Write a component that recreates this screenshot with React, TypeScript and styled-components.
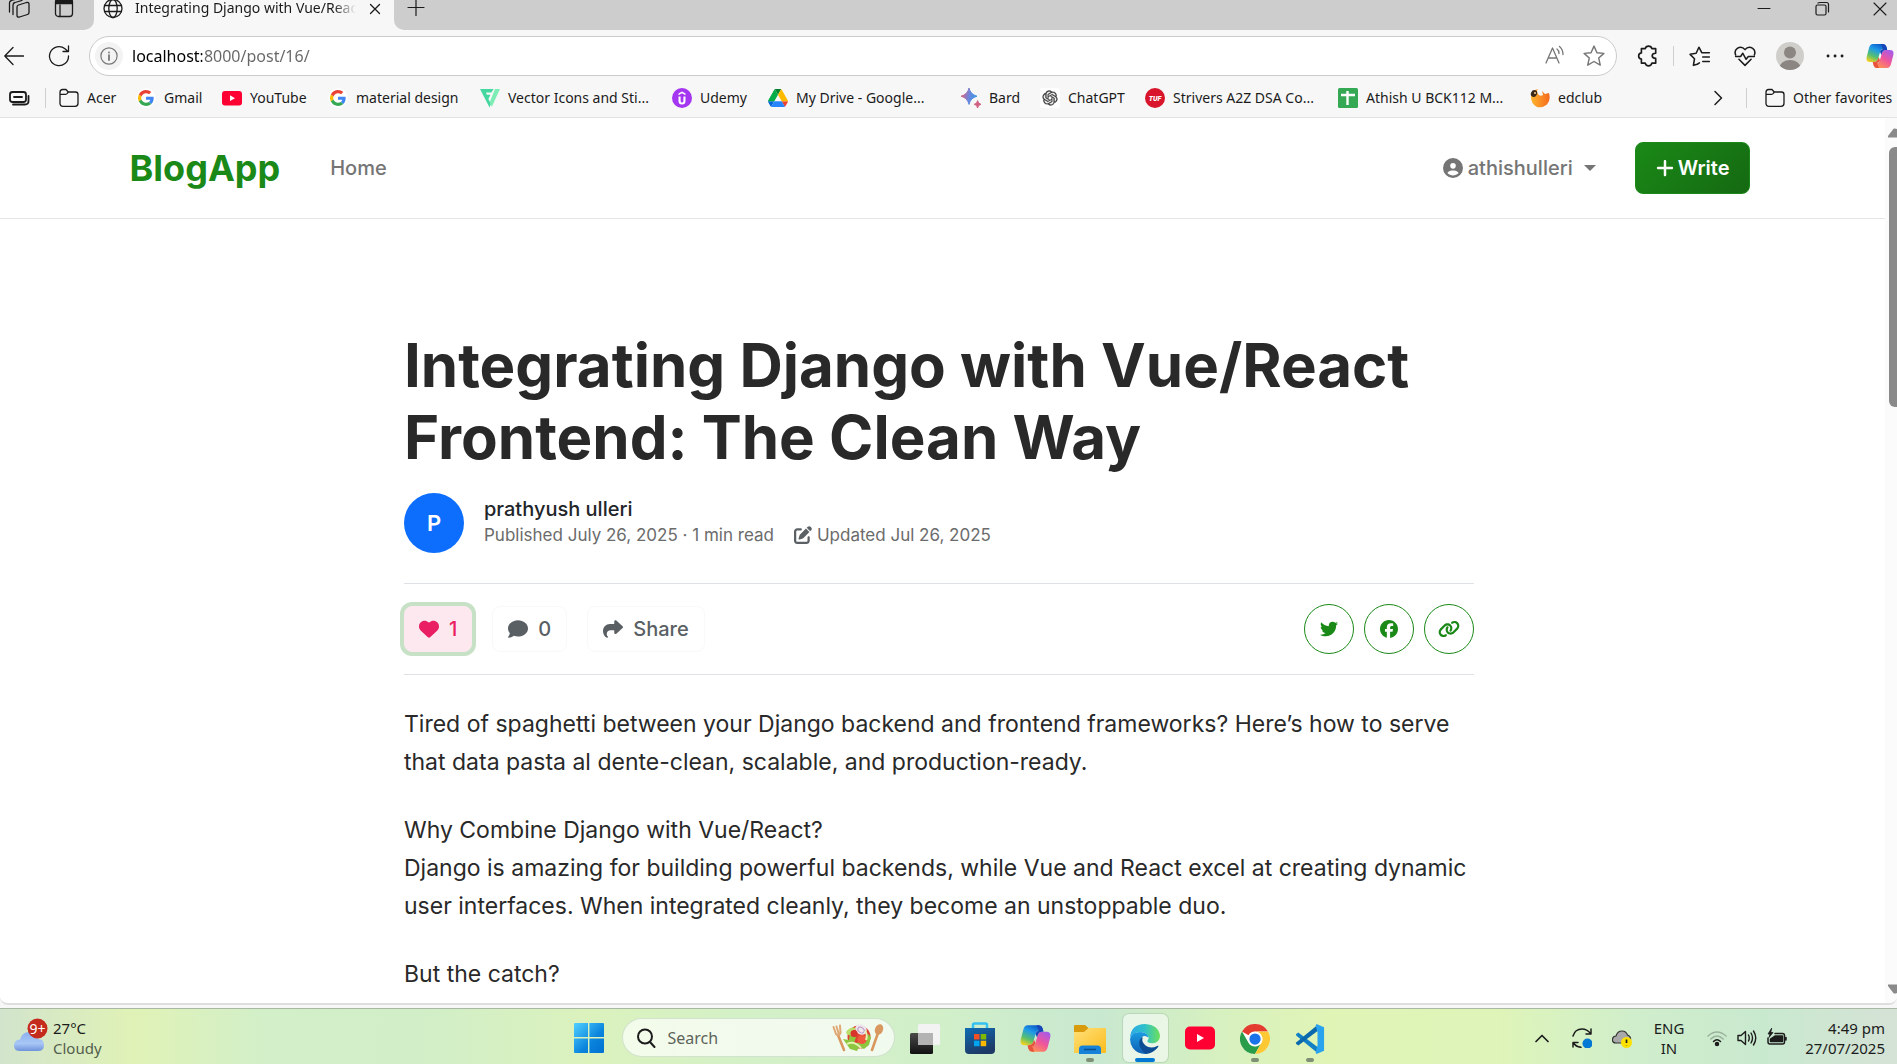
import React from 'react';
import styled, { createGlobalStyle, css } from 'styled-components';
import {
  FaCircleUser, FaPlus, FaHeart, FaComment, FaShare, FaTwitter, FaFacebook, FaLink, FaPenToSquare,
} from 'react-icons/fa6';

const UI = '"Noto Sans", "Open Sans", sans-serif';
const WEB = 'Inter, "Liberation Sans", sans-serif';

const Global = createGlobalStyle`
  * { box-sizing: border-box; }
  html, body { margin: 0; padding: 0; overflow: hidden; }
  body { font-family: ${WEB}; background: #f7f7f7; }
  button { font: inherit; color: inherit; border: 0; background: none; padding: 0; margin: 0; }
  a { color: inherit; text-decoration: none; }
  svg { display: block; flex: none; }
`;

const Screen = styled.div`
  display: flex;
  flex-direction: column;
  height: 100vh;
  background: #f7f7f7;
`;

/* ---------- browser frame ---------- */

const TabStrip = styled.div`
  display: flex;
  height: 30px;
  font: 14px/16px ${UI};
  color: #1b1b1b;
  background: #f7f7f7;
`;
const StripLeft = styled.div`
  display: flex;
  width: 94px;
  padding-left: 8px;
  gap: 24px;
  background: #cdcdcd;
  border-radius: 0 0 10px 0;
`;
const StripRight = styled.div`
  display: flex;
  flex: 1;
  justify-content: space-between;
  padding: 0 7px 0 12px;
  background: #cdcdcd;
  border-radius: 0 0 0 10px;
`;
const Tab = styled.div`
  display: flex;
  width: 300px;
  padding: 0 12px 0 9px;
  gap: 12px;
`;
const TabTitle = styled.span`
  flex: 1;
  overflow: hidden;
  white-space: nowrap;
  mask-image: linear-gradient(90deg, #000 90%, transparent);
`;
const WindowButtons = styled.div`
  display: flex;
  gap: 38px;
`;
const IconButton = styled.button`
  display: flex;
  align-items: center;
  justify-content: center;
  flex: none;
`;
const StripButton = styled(IconButton)`
  height: 18px;
`;

const Toolbar = styled.div`
  display: flex;
  align-items: center;
  height: 52px;
  padding-left: 4px;
  color: #1b1b1b;
`;
const NavButtons = styled.div`
  display: flex;
  gap: 24px;
  padding-right: 19px;
`;
const AddressBar = styled.div`
  display: flex;
  align-items: center;
  flex: 1;
  height: 40px;
  padding: 0 11px 0 5px;
  gap: 17px;
  border: 1px solid #cbcbcb;
  border-radius: 20px;
  background: #fff;
  color: #767676;
`;
const SiteInfo = styled(IconButton)`
  width: 28px;
  height: 28px;
  margin-right: -8px;
  border-radius: 50%;
  background: #f3f3f3;
`;
const Url = styled.input`
  flex: 1;
  min-width: 0;
  height: 30px;
  padding: 0;
  border: 0;
  outline: 0;
  font: 16px/30px ${UI};
  color: transparent;
  background: linear-gradient(90deg, #000 70px, #666 70px);
  background-clip: text;
`;
const ToolbarActions = styled.div`
  display: flex;
  align-items: center;
  width: 280px;
  padding-left: 8px;
`;
const Divider = styled.span`
  flex: none;
  width: 1px;
  height: 20px;
  background: #cfcfcf;
`;
const ToolButton = styled(IconButton)`
  width: 45px;
  height: 36px;
`;
const ToolDivider = styled(Divider)`
  margin: 0 3px;
`;

const Bookmarks = styled.nav`
  display: flex;
  align-items: center;
  height: 36px;
  padding: 0 5px 4px 8px;
  font: 14px/20px ${UI};
  color: #1b1b1b;
  border-bottom: 1px solid #e3e3e3;
`;
const BookmarkList = styled.div`
  display: flex;
  flex: 1;
  gap: 20px;
  padding-left: 13px;
`;
const Bookmark = styled.a<{ $label?: number }>`
  display: flex;
  align-items: center;
  gap: 8px;
  span { width: ${p => (p.$label ? `${p.$label}px` : 'auto')}; white-space: nowrap; }
`;
const BookmarkTail = styled.div`
  display: flex;
  align-items: center;
  gap: 18px;
`;
const EssentialsButton = styled(IconButton)`
  width: 22px;
  margin-right: 15px;
`;

/* ---------- web page ---------- */

const Viewport = styled.div`
  display: flex;
  flex: 1;
  min-height: 0;
  overflow: hidden;
  background: #fff;
  border-bottom: 2px solid #dedede;
  border-radius: 0 0 8px 8px;
`;
const Page = styled.div`
  flex: 1;
  min-width: 0;
  overflow: hidden;
`;
const Scrollbar = styled.div`
  display: flex;
  flex-direction: column;
  justify-content: space-between;
  align-items: flex-end;
  width: 12px;
  padding: 10px 0 9px;
  overflow: hidden;
  background: #fbfbfb;
`;
const Thumb = styled.div`
  width: 8px;
  height: 260px;
  margin: 9px 0 auto;
  border-radius: 6px 0 0 6px;
  background: #8a8a8a;
`;

const SiteHeader = styled.header`
  padding: 0 6px 0 0;
  border-bottom: 1px solid #e6e6e6;
`;
const HeaderInner = styled.div`
  display: flex;
  align-items: center;
  max-width: 1620px;
  height: 100px;
  margin: 0 auto;
  font-size: 20px;
  font-weight: 500;
  color: #757575;
`;
const Brand = styled.a`
  font-size: 36px;
  line-height: 48px;
  font-weight: 700;
  color: #1a8917;
`;
const HomeLink = styled.a`
  margin: 0 auto 0 50px;
`;
const UserMenu = styled.button`
  display: flex;
  align-items: center;
  gap: 5px;
  margin-right: 39px;
`;
const Caret = styled.i`
  margin-left: 6px;
  border: 6px solid transparent;
  border-top-color: currentColor;
  border-bottom: 0;
`;
const WriteButton = styled.button`
  display: flex;
  align-items: center;
  gap: 3px;
  height: 52px;
  padding: 0 19px;
  font-weight: 600;
  color: #fff;
  border: 1px solid #1a8917;
  border-radius: 8px;
  background: linear-gradient(135deg, #1a8917, #156912);
`;

const ArticleWrap = styled.main`
  padding: 110px 7px 0 0;
`;
const Article = styled.article`
  max-width: 1070px;
  margin: 0 auto;
  color: #292929;
`;
const Title = styled.h1`
  margin: 0 0 20px;
  font-size: 60px;
  line-height: 72px;
  font-weight: 700;
`;
const Byline = styled.div`
  display: flex;
  align-items: center;
  gap: 20px;
  margin-bottom: 30px;
`;
const AuthorBadge = styled.div`
  display: grid;
  place-items: center;
  width: 60px;
  height: 60px;
  border-radius: 50%;
  background: #0d6efd;
  color: #fff;
  font-size: 22px;
  font-weight: 600;
`;
const AuthorText = styled.div`
  padding-bottom: 4px;
`;
const AuthorName = styled.div`
  font-size: 20px;
  line-height: 28px;
  font-weight: 500;
  color: #212529;
`;
const Meta = styled.div`
  display: flex;
  align-items: center;
  gap: 5px;
  font-size: 17px;
  line-height: 24px;
  color: #6b6b6b;
  svg { margin-left: 15px; color: #5b6065; }
`;
const ActionBar = styled.div`
  display: flex;
  justify-content: space-between;
  align-items: center;
  padding: 20px 0;
  border: solid #dee2e6;
  border-width: 1px 0;
`;
const Group = styled.div<{ $gap: number }>`
  display: flex;
  align-items: center;
  gap: ${p => p.$gap}px;
`;
const ActionButton = styled.button<{ $active?: boolean }>`
  display: flex;
  align-items: center;
  gap: 10px;
  height: 46px;
  padding: 0 15px;
  font-size: 20px;
  font-weight: 500;
  color: #5a5f64;
  border: 1px solid #f8f9fa;
  border-radius: 8px;
  ${p => p.$active && css`
    padding: 0 14px;
    color: #e91e63;
    background: #fde8ef;
    border-color: #fde8ef;
    box-shadow: 0 0 0 4px #c6e1c5;
  `}
`;
const RoundButton = styled.button`
  display: grid;
  place-items: center;
  width: 50px;
  height: 50px;
  border: 1px solid #1a8917;
  border-radius: 50%;
  color: #1a8917;
`;
const Copy = styled.div`
  padding-top: 30px;
  font-size: 23px;
  line-height: 38px;
  p { margin: 0 0 30px; }
`;

/* ---------- taskbar ---------- */

const FrameEdge = styled.div`
  height: 3px;
`;
const TaskbarRoot = styled.footer`
  display: grid;
  grid-template-columns: 1fr auto 1fr;
  align-items: center;
  height: 56px;
  padding-top: 2px;
  font: 15px/20px ${UI};
  color: #1c1c1c;
  border-top: 1px solid #a8b8a2;
  background: linear-gradient(90deg, #d2e4cc 0%, #e0f2b6 7%, #d2efc9 14%, #d1eec8 22%, #dbf2bd 31%, #d3f0c8 40%, #d1efc9 50%, #c8e8d0 58%, #d6f0c0 64%, #e0f4b6 70%, #def4b8 79%, #d0eecb 86%, #c9e9cf 93%, #d5e2d6 100%);
`;
const Weather = styled.button`
  display: flex;
  align-items: center;
  gap: 5px;
  padding-left: 13px;
  text-align: left;
  small { display: block; font-size: 15px; color: #535f4d; }
`;
const Dock = styled.div`
  display: flex;
  align-items: center;
  padding-left: 14px;
`;
const DockButton = styled.button<{ $active?: boolean; $running?: boolean }>`
  display: flex;
  flex-direction: column;
  align-items: center;
  justify-content: flex-end;
  gap: 4px;
  width: 45px;
  height: 48px;
  margin: 0 5px;
  border-radius: 6px;
  background: ${p => (p.$active ? 'rgba(255,255,255,.55)' : 'none')};
  box-shadow: ${p => (p.$active ? '0 0 0 1px rgba(150,180,150,.35)' : 'none')};
  &::after {
    content: '';
    width: ${p => (p.$active ? 20 : 8)}px;
    height: 4px;
    border-radius: 2px;
    background: ${p => (p.$active ? '#0078d4' : p.$running ? '#7d8f74' : 'transparent')};
  }
`;
const SearchBox = styled.label`
  display: flex;
  align-items: center;
  width: 273px;
  height: 39px;
  margin: 0 3px 0 18px;
  padding: 0 10px 0 13px;
  gap: 12px;
  border-radius: 20px;
  background: rgba(255,255,255,.68);
  border: 1px solid rgba(150,180,150,.35);
  input {
    flex: 1;
    min-width: 0;
    padding: 0;
    border: 0;
    outline: 0;
    background: none;
    font: 16px/24px ${UI};
    &::placeholder { color: #5d645a; opacity: 1; }
  }
`;
const Tray = styled.div`
  display: flex;
  align-items: center;
  justify-content: flex-end;
  padding-right: 12px;
`;
const TrayIcons = styled.div<{ $gap: number }>`
  display: flex;
  align-items: center;
  gap: ${p => p.$gap}px;
`;
const Language = styled.button`
  width: 48px;
  margin: 0 14px 0 13px;
  text-align: center;
`;
const Clock = styled.button`
  width: 94px;
  margin-left: 4px;
  text-align: right;
  white-space: nowrap;
`;

/* ---------- drawings ---------- */

type LineProps = { w?: number; h?: number; box?: string; sw?: number; children: React.ReactNode };
const Line = ({ w = 20, h, box = '0 0 20 20', sw = 1.3, children }: LineProps) => (
  <svg width={w} height={h ?? w} viewBox={box} fill="none" stroke="currentColor" strokeWidth={sw} strokeLinecap="round" strokeLinejoin="round" aria-hidden="true">
    {children}
  </svg>
);

const FolderIcon = () => (
  <Line><path d="M1 4.2Q1 1.5 3.6 1.5H7L9.2 4H16.5Q19 4 19 6.6V15.2Q19 18.3 16 18.3H4Q1 18.3 1 15.2ZM1 6.4H6.2Q7.2 6.4 8 5.6L9.4 4" /></Line>
);
const GoogleIcon = () => (
  <svg width="20" height="20" viewBox="-6 -6 60 60" aria-hidden="true">
    <circle cx="24" cy="24" r="29" fill="#fff" />
    <path fill="#EA4335" d="M24 9.5c3.54 0 6.71 1.22 9.21 3.6l6.85-6.85C35.9 2.38 30.47 0 24 0 14.62 0 6.51 5.38 2.56 13.22l7.98 6.19C12.43 13.72 17.74 9.5 24 9.5z" />
    <path fill="#4285F4" d="M46.98 24.55c0-1.57-.15-3.09-.38-4.55H24v9.02h12.94c-.58 2.96-2.26 5.48-4.78 7.18l7.73 6c4.51-4.18 7.09-10.36 7.09-17.65z" />
    <path fill="#FBBC05" d="M10.53 28.59A14.5 14.5 0 0 1 9.77 24c0-1.6.27-3.14.76-4.59l-7.98-6.19A23.9 23.9 0 0 0 0 24c0 3.88.92 7.54 2.56 10.78z" />
    <path fill="#34A853" d="M24 48c6.48 0 11.93-2.13 15.89-5.81l-7.73-6c-2.15 1.45-4.92 2.3-8.16 2.3-6.26 0-11.57-4.22-13.47-9.91l-7.98 6.19C6.51 42.62 14.62 48 24 48z" />
  </svg>
);
const YouTubeIcon = () => (
  <svg width="20" height="20" viewBox="0 0 20 20" aria-hidden="true">
    <rect y="3" width="20" height="14.4" rx="3" fill="#ff0033" /><path d="M8 7.3 13 10.2 8 13.1Z" fill="#fff" />
  </svg>
);
const VectorIcon = () => (
  <svg width="20" height="20" viewBox="0 0 22 22" aria-hidden="true">
    <path d="M0 1H15L12.5 5H6.5L7.5 7.5H11.500L9.500 11.500H9L12 17.5L10.5 21.500Z" fill="#44d8a0" />
    <path d="M16.500 1H22L13 20.500L10.800 15.5Z" fill="#7cedb4" />
  </svg>
);
const UdemyIcon = () => (
  <svg width="20" height="20" viewBox="0 0 20 20" aria-hidden="true">
    <circle cx="10" cy="10" r="10" fill="#a435f0" />
    <path d="M6.5 5.5 10 3.4 13.5 5.5V7.2L10 5.2 6.5 7.2ZM6.5 8.5H8.6V13Q8.6 14.6 10 14.6T11.4 13V8.5H13.5V13Q13.5 16.5 10 16.5T6.5 13Z" fill="#fff" />
  </svg>
);
const DriveIcon = () => (
  <svg width="20" height="20" viewBox="0 0 87.3 78" aria-hidden="true">
    <path d="m6.6 66.85 3.85 6.65c.8 1.4 1.95 2.5 3.3 3.3l13.75-23.8h-27.5c0 1.55.4 3.1 1.2 4.5z" fill="#0066da" />
    <path d="m43.65 25-13.75-23.8c-1.35.8-2.5 1.9-3.3 3.3l-25.4 44a9.06 9.06 0 0 0-1.2 4.5h27.5z" fill="#00ac47" />
    <path d="m73.55 76.8c1.35-.8 2.5-1.9 3.3-3.3l1.6-2.75 7.65-13.25c.8-1.4 1.2-2.95 1.2-4.5h-27.5l5.85 11.5z" fill="#ea4335" />
    <path d="m43.65 25 13.75-23.8c-1.35-.8-2.9-1.2-4.5-1.2h-18.5c-1.6 0-3.15.45-4.5 1.2z" fill="#00832d" />
    <path d="m59.8 53h-32.3l-13.75 23.8c1.35.8 2.9 1.2 4.5 1.2h50.8c1.6 0 3.15-.45 4.5-1.2z" fill="#2684fc" />
    <path d="m73.4 26.5-12.7-22c-.8-1.4-1.95-2.5-3.3-3.3l-13.75 23.8 16.15 28h27.45c0-1.55-.4-3.1-1.2-4.5z" fill="#ffba00" />
  </svg>
);
const BardIcon = () => (
  <svg width="20" height="20" viewBox="0 0 20 20" aria-hidden="true">
    <defs><linearGradient id="bard" x1="0" x2="1" y1=".4" y2=".6"><stop stopColor="#e0607d" /><stop offset=".5" stopColor="#6a86dd" /><stop offset="1" stopColor="#3a9be8" /></linearGradient></defs>
    <path d="M8 0Q9.500 6.500 16 8.200 9.500 9.900 8 16.400 6.500 9.900 0 8.200 6.500 6.500 8 0Z" fill="url(#bard)" stroke="url(#bard)" strokeWidth="1" />
    <path d="M16.6 12.6Q17 15.8 20 16.3 17 16.8 16.6 20 16.2 16.8 13.2 16.3 16.2 15.8 16.6 12.6Z" fill="#d0607f" stroke="#d0607f" strokeWidth="1" />
  </svg>
);
const GptIcon = () => (
  <svg width="20" height="20" viewBox="-4 -4 32 32" aria-hidden="true">
    <rect x="-4" y="-4" width="32" height="32" rx="4" fill="#fff" />
    <path fill="#3b3b3b" stroke="#3b3b3b" strokeWidth=".5" d="M22.28 9.82a5.98 5.98 0 0 0-.52-4.91 6.05 6.05 0 0 0-6.51-2.9A6.07 6.07 0 0 0 4.98 4.18a5.98 5.98 0 0 0-4 2.9 6.05 6.05 0 0 0 .74 7.1 5.98 5.98 0 0 0 .51 4.91 6.05 6.05 0 0 0 6.52 2.9A5.98 5.98 0 0 0 13.26 24a6.06 6.06 0 0 0 5.77-4.21 5.99 5.99 0 0 0 4-2.9 6.06 6.06 0 0 0-.75-7.07zm-9.02 12.61a4.48 4.48 0 0 1-2.88-1.04l.14-.08 4.78-2.76a.8.8 0 0 0 .39-.68v-6.74l2.02 1.17.04.05v5.58a4.5 4.5 0 0 1-4.49 4.5zM3.6 18.3a4.47 4.47 0 0 1-.54-3.01l.14.08 4.78 2.76a.77.77 0 0 0 .78 0l5.84-3.37v2.33l-.03.07-4.83 2.79A4.5 4.5 0 0 1 3.6 18.3zM2.34 7.9A4.49 4.49 0 0 1 4.7 5.92V11.6a.77.77 0 0 0 .39.68l5.81 3.35-2.02 1.17h-.07l-4.83-2.79A4.5 4.5 0 0 1 2.34 7.9zm16.6 3.86L13.1 8.36l2.02-1.16h.07l4.83 2.79a4.49 4.49 0 0 1-.68 8.1v-5.68a.79.79 0 0 0-.4-.66zm2-3.02-.14-.09-4.77-2.78a.78.78 0 0 0-.79 0L9.41 9.23V6.9l.03-.07 4.83-2.78a4.5 4.5 0 0 1 6.68 4.66zM8.3 12.86 6.28 11.7l-.03-.06V6.07a4.5 4.5 0 0 1 7.37-3.45l-.14.08L8.7 5.46a.8.8 0 0 0-.4.68zm1.1-2.36L12 8.99l2.61 1.5v3L12 15l-2.6-1.5z" />
  </svg>
);
const TufIcon = () => (
  <svg width="20" height="20" viewBox="0 0 20 20" aria-hidden="true">
    <circle cx="10" cy="10" r="10" fill="#d8152a" />
    <text x="10" y="12.6" textAnchor="middle" fontFamily="Roboto, sans-serif" fontSize="7" fontWeight="900" fontStyle="italic" fill="#fff">TUF</text>
  </svg>
);
const SheetsIcon = () => (
  <svg width="20" height="20" viewBox="0 0 20 20" aria-hidden="true">
    <rect width="20" height="20" rx="1.5" fill="#34a853" /><path d="M3 7H17M9.5 3V17" stroke="#fff" strokeWidth="2.4" />
  </svg>
);
const EdclubIcon = () => (
  <svg width="20" height="20" viewBox="0 0 20 20" aria-hidden="true">
    <defs><linearGradient id="edc" x1="0" x2="1"><stop stopColor="#ffb52e" /><stop offset="1" stopColor="#f56a1c" /></linearGradient></defs>
    <path d="M8 1Q6 3 8 6 10 9 13 7L12 3 15 6 19 5Q21 12 17 16.500 13 20 7 19 1 16 1 9 1 2 8 1Z" fill="url(#edc)" />
    <ellipse cx="4" cy="5.500" rx="3" ry="3.600" fill="#3b2a1c" transform="rotate(25 4 5.500)" /><circle cx="5" cy="5" r="1" fill="#ffd28a" />
  </svg>
);
const CopilotIcon = ({ size }: { size: number }) => (
  <svg width={size} height={size} viewBox="0 0 28 28" aria-hidden="true">
    <defs>
      <linearGradient id="cpA" x1=".7" y1="0" x2=".2" y2="1"><stop stopColor="#0b57c8" /><stop offset=".35" stopColor="#1f9be8" /><stop offset=".7" stopColor="#58c06c" /><stop offset="1" stopColor="#f2d21f" /></linearGradient>
      <linearGradient id="cpB" x1=".9" y1="0" x2=".2" y2="1"><stop stopColor="#a05cf0" /><stop offset=".5" stopColor="#f0559b" /><stop offset="1" stopColor="#ff9a4a" /></linearGradient>
    </defs>
    <path d="M7 2H17Q19.500 2 20.300 4.500L21 7H17Q15 7 14.400 9L12 17Q11 20 8 20H4Q-.5 20 .8 14.500L3 6Q4 2 7 2Z" fill="url(#cpA)" />
    <path d="M21 26H11Q8.500 26 7.700 23.500L7 21H11Q13 21 13.600 19L16 11Q17 8 20 8H24Q28.500 8 27.200 13.500L25 22Q24 26 21 26Z" fill="url(#cpB)" />
    <path d="M17 2Q19.500 2 20.300 4.500L21.300 8H20Q17 8 16 11L15.400 13 14 9.800Q15 7 17 7L15 2Z" fill="#1746b8" />
    <path d="M11 26Q8.500 26 7.700 23.500L6.700 20H8Q11 20 12 17L12.600 15 14 18.200Q13 21 11 21L13 26Z" fill="#e8553c" />
  </svg>
);
const WeatherIcon = () => (
  <svg width="35" height="40" viewBox="0 0 35 40" aria-hidden="true">
    <defs><linearGradient id="cl" x1="0" x2="0" y1="0" y2="1"><stop stopColor="#8ab0ee" /><stop offset=".6" stopColor="#a9c7f6" /><stop offset="1" stopColor="#6f93dd" /></linearGradient></defs>
    <path d="M7 33Q1 33 1 27.500 1 22 7 21.500 9 14 16 14 23 14 25 21 31 21 31 27 31 33 25 33Z" fill="url(#cl)" />
    <circle cx="24.500" cy="10.500" r="10" fill="#c42b1c" />
    <text x="24.500" y="15.500" textAnchor="middle" fontFamily="Noto Sans, sans-serif" fontSize="14" fill="#fff">9+</text>
  </svg>
);
const StartIcon = () => (
  <svg width="30" height="30" viewBox="0 0 30 30" aria-hidden="true">
    <defs><linearGradient id="win" gradientUnits="userSpaceOnUse" x1="0" y1="0" x2="30" y2="30"><stop stopColor="#4fd0ff" /><stop offset=".6" stopColor="#0a84dc" /><stop offset="1" stopColor="#0070d0" /></linearGradient></defs>
    <path d="M1 0H14V14H0V1Q0 0 1 0ZM15.400 0H29Q30 0 30 1V14H15.400ZM0 15.400H14V30H1Q0 30 0 29ZM15.400 15.400H30V29Q30 30 29 30H15.400Z" fill="url(#win)" />
  </svg>
);
const SaladIcon = () => (
  <svg width="52" height="30" viewBox="0 0 52 30" aria-hidden="true">
    <path d="M6 12 12 27M46 10 40 27" stroke="#d9985f" strokeWidth="2.600" strokeLinecap="round" />
    <path d="M1.500 4 4 11Q7 14 8.500 10L8 2.500M4.500 3.500 6.500 10" fill="none" stroke="#e0a873" strokeWidth="2" strokeLinecap="round" />
    <ellipse cx="47" cy="6.500" rx="4" ry="5.500" fill="#d9985f" transform="rotate(20 47 6.500)" />
    <circle cx="27" cy="14" r="11.500" fill="#dd4430" />
    <path d="M11 16 17 17 18 10 24 14 22 20 34 19 36 11 39 14 37 22 32 26 27 24 25 28 18 26Z" fill="#8dc63f" />
    <path d="M14 9Q18 3 24 5L20 12Q15 13 14 9Z" fill="#b8df6a" />
    <ellipse cx="29" cy="6.500" rx="6" ry="5" fill="#efe6ec" transform="rotate(35 29 6.500)" /><ellipse cx="29" cy="7" rx="3.500" ry="2.500" fill="none" stroke="#b99bc4" transform="rotate(35 29 7)" />
    <circle cx="30" cy="16.500" r="4.500" fill="#f0593c" /><circle cx="22" cy="10.500" r="3.500" fill="#d8342b" />
    <path d="M15 21Q22 17 29 25M33 8Q36 12 34 17" stroke="#e3f3b0" strokeWidth="2" fill="none" />
  </svg>
);
const TaskViewIcon = () => (
  <svg width="30" height="30" viewBox="0 0 30 30" aria-hidden="true">
    <defs><linearGradient id="tv" x1="0" x2="0" y1="0" y2="1"><stop stopColor="#4a4a4a" /><stop offset="1" stopColor="#111" /></linearGradient></defs>
    <rect y="9" width="23" height="21" rx="1.500" fill="url(#tv)" /><rect x="8" y="0" width="22" height="21" rx="1.500" fill="#f3f3f3" /><rect x="8" y="9" width="15" height="12" fill="#b3b3b3" />
  </svg>
);
const StoreIcon = () => (
  <svg width="30" height="32" viewBox="0 0 30 32" aria-hidden="true">
    <defs><linearGradient id="st" x1="0" x2=".4" y1="0" y2="1"><stop stopColor="#0f6cb5" /><stop offset="1" stopColor="#1d3a66" /></linearGradient></defs>
    <path d="M8 8V3Q8 1.500 9.500 1.500H20.500Q22 1.500 22 3V8" fill="none" stroke="#35c1f1" strokeWidth="2.500" />
    <path d="M0 6H30V28Q30 32 26 32H4Q0 32 0 28Z" fill="url(#st)" />
    <path d="M9 12H14.500V17.500H9Z" fill="#f25022" /><path d="M15.700 12H21.200V17.500H15.700Z" fill="#7fba00" /><path d="M9 18.700H14.500V24.200H9Z" fill="#00a4ef" /><path d="M15.700 18.700H21.200V24.200H15.700Z" fill="#ffb900" />
  </svg>
);
const ExplorerIcon = () => (
  <svg width="32" height="30" viewBox="0 0 32 30" aria-hidden="true">
    <defs><linearGradient id="ex" x1="0" x2="1" y1="0" y2="1"><stop stopColor="#ffe07a" /><stop offset="1" stopColor="#fbbc1c" /></linearGradient></defs>
    <path d="M0 2Q0 1 1.500 1H11L14.500 4V8H0Z" fill="#d99a0b" /><path d="M0 8H10L14.500 4H31Q32 4 32 5V28Q32 29 31 29H0Z" fill="url(#ex)" />
    <path d="M5 30V25Q5 21.500 8.500 21.500H23.500Q27 21.500 27 25V30Z" fill="#1683d8" /><path d="M10 25.500H22" stroke="#0c4f91" strokeWidth="1.500" />
  </svg>
);
const EdgeIcon = () => (
  <svg width="30" height="30" viewBox="0 0 32 32" aria-hidden="true">
    <defs>
      <linearGradient id="egA" x1="0" x2="1"><stop stopColor="#2aa9e8" /><stop offset=".5" stopColor="#2fc1c9" /><stop offset="1" stopColor="#6fe05a" /></linearGradient>
      <linearGradient id="egB" x1="0" x2="0" y1="0" y2="1"><stop stopColor="#1b9de2" /><stop offset="1" stopColor="#0f5fb4" /></linearGradient>
    </defs>
    <path d="M0 15Q1 0 16 0 31 1 32 13 31.500 20 24 20.500 18 20 18.500 18 20.500 16 19.500 13 17 8.500 10 8.500 3 9 0 15Z" fill="url(#egA)" />
    <path d="M0 16Q2 8.500 10 8.500 17 8.500 19.500 13L19 14Q13 10 11 18 10 27 19 31.700 9 33 3 25.500 0 21 0 16Z" fill="url(#egB)" />
    <path d="M12.500 14Q8 19 11 25 14 31 19 31.700 26 30 30 24.500 31 22.500 29 23.500 22 27 16.500 23 12 19 13.500 14.500Z" fill="#0b4c94" />
  </svg>
);
const YouTubeTile = () => (
  <svg width="30" height="32" viewBox="0 0 30 32" aria-hidden="true">
    <rect y="4.500" width="30" height="23" rx="5" fill="#ff0033" /><path d="M12 12 19 16 12 20Z" fill="#fff" />
  </svg>
);
const ChromeIcon = () => (
  <svg width="30" height="30" viewBox="0 0 48 48" aria-hidden="true">
    <circle cx="24" cy="24" r="24" fill="#fff" />
    <path d="M3.200 12A24 24 0 0 1 44.800 12H24A12 12 0 0 0 13.600 18Z" fill="#e33b2e" />
    <path d="M3.200 12A24 24 0 0 0 24 48L34.400 30A12 12 0 0 1 13.600 30Z" fill="#2a9d4a" />
    <path d="M44.800 12A24 24 0 0 1 24 48L34.400 30A12 12 0 0 0 34.400 18 12 12 0 0 0 24 12Z" fill="#fcc934" />
    <circle cx="24" cy="24" r="11.500" fill="#fff" /><circle cx="24" cy="24" r="9" fill="#1a73e8" />
  </svg>
);
const CodeIcon = () => (
  <svg width="30" height="30" viewBox="0 0 32 32" aria-hidden="true">
    <path d="M1 11 3.500 9 24 24.500V31L1.500 12.500Z" fill="#1180c4" /><path d="M1 21 3.500 23 24 7.500V1L1.500 19.500Z" fill="#0a68ac" />
    <path d="M23 0 31 3.500V28.500L23 32 22 30.500 24 23V9L22 1.500Z" fill="#2aa3ee" />
  </svg>
);

const bookmarks: { label: string; w: number; icon: React.ReactNode }[] = [
  { label: 'Acer', w: 29, icon: <FolderIcon /> },
  { label: 'Gmail', w: 38, icon: <GoogleIcon /> },
  { label: 'YouTube', w: 58, icon: <YouTubeIcon /> },
  { label: 'material design', w: 104, icon: <GoogleIcon /> },
  { label: 'Vector Icons and Sti...', w: 144, icon: <VectorIcon /> },
  { label: 'Udemy', w: 48, icon: <UdemyIcon /> },
  { label: 'My Drive - Google...', w: 145, icon: <DriveIcon /> },
  { label: 'Bard', w: 31, icon: <BardIcon /> },
  { label: 'ChatGPT', w: 57, icon: <GptIcon /> },
  { label: 'Strivers A2Z DSA Co...', w: 145, icon: <TufIcon /> },
  { label: 'Athish U BCK112 M...', w: 144, icon: <SheetsIcon /> },
  { label: 'edclub', w: 46, icon: <EdclubIcon /> },
];

function Browser() {
  return (
    <>
      <TabStrip>
        <StripLeft>
          <StripButton aria-label="Workspaces">
            <Line w={22} box="0 0 22 22"><path d="M1.500 14V5Q1.500 3 3.500 2.500L10 .5M5 16.500V7Q5 5 7 4.500L14 2.500" /><path d="M9 9Q9 7.500 10.500 7L18.500 4.500Q21 4 21 6V14.500Q21 16 19.500 16.500L11.500 19Q9 19.500 9 17.500Z" /></Line>
          </StripButton>
          <StripButton aria-label="Tab actions">
            <Line><rect x="1.500" y="0" width="17" height="17.500" rx="3" /><path d="M6 6V17" /><path d="M2 1H18V4.500H2Z" fill="currentColor" /></Line>
          </StripButton>
        </StripLeft>
        <Tab>
          <Line><circle cx="10" cy="8.500" r="9" /><ellipse cx="10" cy="8.500" rx="4.200" ry="9" /><path d="M1.500 5.500H18.500M1.500 11.500H18.500" /></Line>
          <TabTitle>Integrating Django with Vue/React</TabTitle>
          <StripButton aria-label="Close tab"><Line w={14} box="0 0 14 14"><path d="M2.500 2.500 11.500 11.500M11.500 2.500 2.500 11.500" /></Line></StripButton>
        </Tab>
        <StripRight>
          <StripButton aria-label="New tab"><Line w={20} sw={1.2}><path d="M2 8.500H18M10 .5V16.500" /></Line></StripButton>
          <WindowButtons>
            <StripButton aria-label="Minimise"><Line sw={1}><path d="M4 9.500H16" /></Line></StripButton>
            <StripButton aria-label="Restore"><Line sw={1.2}><rect x="4" y="6" width="10" height="10" rx="1.500" /><path d="M6 4Q7 3.500 8 3.500H14.500Q16.500 3.500 16.500 5.500V13" /></Line></StripButton>
            <StripButton aria-label="Close"><Line sw={1.1}><path d="M4 4 16 16M16 4 4 16" /></Line></StripButton>
          </WindowButtons>
        </StripRight>
      </TabStrip>
      <Toolbar>
        <NavButtons>
          <IconButton aria-label="Back"><Line><path d="M19.500 10H.8M9 1.500.8 10 9 18.500" /></Line></IconButton>
          <IconButton aria-label="Refresh"><Line w={22} box="0 0 22 22"><path d="M20.500 11A9.500 9.500 0 1 1 17 3.800L20 6.500M20.500 1V6.500H15" /></Line></IconButton>
        </NavButtons>
        <AddressBar>
          <SiteInfo aria-label="Site information"><Line w={18}><circle cx="10" cy="10" r="9" /><path d="M10 9V14.500M10 6V6.200" strokeWidth="2" /></Line></SiteInfo>
          <Url aria-label="Address" defaultValue="localhost:8000/post/16/" />
          <IconButton aria-label="Read aloud"><Line w={22} box="0 0 22 22"><path d="M2 18 8.500 3 15 18M4.200 13H12.800M13 4Q15 5.500 15 8.500M15.500 1.500Q19 4.500 19 9.500" /></Line></IconButton>
          <IconButton aria-label="Favourite"><Line w={22}><path d="M10 1 12.700 7 19 7.600 14.300 11.900 15.700 18.300 10 15 4.300 18.300 5.700 11.900 1 7.600 7.300 7Z" /></Line></IconButton>
        </AddressBar>
        <ToolbarActions>
          <ToolButton aria-label="Extensions"><Line w={22} sw={1.5}><path d="M7.500 3.300Q8 1 10.500 1T13.500 3.300H17V7.500Q13.800 7.500 13.800 9.800T17 12.200V16.500H13.500Q13 19 10.500 19T7.500 16.500H4V12.800Q1.500 12.500 1.500 10T4 7.200V3.300Z" /></Line></ToolButton>
          <ToolDivider />
          <ToolButton aria-label="Favourites"><Line w={22} sw={1.4}><path d="M7.500 17.500 4 18.500 5 12.500 1 8.500 6.500 7.500 9 2 11.600 7H18.500M12.500 11H18.500M12.500 15H18.500M7.500 17.500 9.500 16.300" /></Line></ToolButton>
          <ToolButton aria-label="Browser essentials"><Line w={22} sw={1.4}><path d="M1.500 9Q0 5 3 3 7 .5 10 4.200 13 .5 17 3 20 5 18.500 9M1.500 10.500H6L8 7.500 11 13 13 10.500H18.500M4.500 13 10 18.500 15.500 13" /></Line></ToolButton>
          <ToolButton aria-label="Profile">
            <svg width="28" height="28" viewBox="0 0 28 28" aria-hidden="true"><defs><clipPath id="pf"><circle cx="14" cy="14" r="14" /></clipPath></defs><g clipPath="url(#pf)"><rect width="28" height="28" fill="#d0cecb" /><circle cx="14" cy="10.500" r="6" fill="#8b8682" /><ellipse cx="14" cy="26" rx="10.500" ry="8" fill="#8b8682" /></g></svg>
          </ToolButton>
          <ToolButton aria-label="Settings and more"><Line w={20} sw={2.8}><path d="M3 10H3.100M10 10H10.100M17 10H17.100" /></Line></ToolButton>
          <ToolButton aria-label="Copilot"><CopilotIcon size={28} /></ToolButton>
        </ToolbarActions>
      </Toolbar>
      <Bookmarks aria-label="Favourites bar">
        <EssentialsButton aria-label="Favourites bar options"><Line w={22} box="0 0 22 22" sw={1.8}><rect x="2" y="5" width="16" height="10" rx="2.500" /><path d="M6 10H14M5 17.500H17Q20.500 17.500 20.500 14V9" /></Line></EssentialsButton>
        <Divider />
        <BookmarkList>
          {bookmarks.map(b => (
            <Bookmark key={b.label} href="#" $label={b.w}>{b.icon}<span>{b.label}</span></Bookmark>
          ))}
        </BookmarkList>
        <BookmarkTail>
          <IconButton aria-label="More favourites"><Line sw={1.5}><path d="M7 3.500 13.500 10 7 16.500" /></Line></IconButton>
          <Divider />
          <Bookmark href="#" $label={99}><FolderIcon /><span>Other favorites</span></Bookmark>
        </BookmarkTail>
      </Bookmarks>
    </>
  );
}

function Blog() {
  return (
    <Viewport>
      <Page>
        <SiteHeader>
          <HeaderInner>
            <Brand href="#">BlogApp</Brand>
            <HomeLink href="#">Home</HomeLink>
            <UserMenu><FaCircleUser size={20} />athishulleri<Caret /></UserMenu>
            <WriteButton><FaPlus size={20} />Write</WriteButton>
          </HeaderInner>
        </SiteHeader>
        <ArticleWrap>
          <Article>
            <Title>Integrating Django with Vue/React Frontend: The Clean Way</Title>
            <Byline>
              <AuthorBadge>P</AuthorBadge>
              <AuthorText>
                <AuthorName>prathyush ulleri</AuthorName>
                <Meta>Published July 26, 2025 · 1 min read <FaPenToSquare size={18} />Updated Jul 26, 2025</Meta>
              </AuthorText>
            </Byline>
            <ActionBar>
              <Group $gap={20}>
                <ActionButton $active><FaHeart size={20} />1</ActionButton>
                <ActionButton><FaComment size={20} />0</ActionButton>
                <ActionButton><FaShare size={20} />Share</ActionButton>
              </Group>
              <Group $gap={10}>
                <RoundButton aria-label="Share on Twitter"><FaTwitter size={18} /></RoundButton>
                <RoundButton aria-label="Share on Facebook"><FaFacebook size={18} /></RoundButton>
                <RoundButton aria-label="Copy link"><FaLink size={22} /></RoundButton>
              </Group>
            </ActionBar>
            <Copy>
              <p>Tired of spaghetti between your Django backend and frontend frameworks? Here’s how to serve that data pasta al dente-clean, scalable, and production-ready.</p>
              <p>Why Combine Django with Vue/React?<br />Django is amazing for building powerful backends, while Vue and React excel at creating dynamic user interfaces. When integrated cleanly, they become an unstoppable duo.</p>
              <p>But the catch?</p>
            </Copy>
          </Article>
        </ArticleWrap>
      </Page>
      <Scrollbar>
        <svg width="9" height="10" viewBox="0 0 9 10" aria-hidden="true"><path d="M0 9.500V8L5.500.8Q7 0 9 1V9.500Z" fill="#8a8a8a" /></svg>
        <Thumb />
        <svg width="9" height="10" viewBox="0 0 9 10" aria-hidden="true"><path d="M0 .5V2L5.500 9.200Q7 10 9 9V.5Z" fill="#8a8a8a" /></svg>
      </Scrollbar>
    </Viewport>
  );
}

function Taskbar() {
  return (
    <TaskbarRoot>
      <Weather><WeatherIcon /><span>27°C<small>Cloudy</small></span></Weather>
      <Dock>
        <IconButton aria-label="Start"><StartIcon /></IconButton>
        <SearchBox>
          <Line w={20} sw={2}><circle cx="9" cy="8.500" r="7" /><path d="M14 14 18.500 19" /></Line>
          <input placeholder="Search" aria-label="Search" />
          <SaladIcon />
        </SearchBox>
        <DockButton aria-label="Task view"><TaskViewIcon /></DockButton>
        <DockButton aria-label="Microsoft Store"><StoreIcon /></DockButton>
        <DockButton aria-label="Copilot"><CopilotIcon size={31} /></DockButton>
        <DockButton aria-label="File Explorer" $running><ExplorerIcon /></DockButton>
        <DockButton aria-label="Microsoft Edge" $active><EdgeIcon /></DockButton>
        <DockButton aria-label="YouTube"><YouTubeTile /></DockButton>
        <DockButton aria-label="Google Chrome" $running><ChromeIcon /></DockButton>
        <DockButton aria-label="Visual Studio Code" $running><CodeIcon /></DockButton>
      </Dock>
      <Tray>
        <TrayIcons $gap={20}>
          <IconButton aria-label="Show hidden icons"><Line w={20} sw={1.7}><path d="M4 13.500 10 7.500 16 13.500" /></Line></IconButton>
          <IconButton aria-label="Update"><Line w={20} sw={1.5}><path d="M1 8Q3 1 10 1 15 1 18.500 5.500M19 1V6H14M1 19V14.500H6M1.500 15Q4 19 9 19.300" /><circle cx="15.500" cy="15.500" r="5" fill="#0078d4" stroke="none" /></Line></IconButton>
          <IconButton aria-label="OneDrive">
            <svg width="20" height="20" viewBox="0 0 20 20" aria-hidden="true"><path d="M4 15Q0 15 .5 11 1 8 4 8 5.500 3 10 3 14 3 15.500 7 19 8 18.500 12L15 15Z" fill="#a9a9a9" stroke="#333" strokeWidth="1.200" /><circle cx="14.500" cy="14.500" r="5.500" fill="#fde100" /><path d="M14.500 11.500V15M14.500 17V17.300" stroke="#222" strokeWidth="1.700" /></svg>
          </IconButton>
        </TrayIcons>
        <Language>ENG<br />IN</Language>
        <TrayIcons $gap={10}>
          <Line sw={1.5}><path d="M1 8Q10 0 19 8M3.800 11Q10 5 16.200 11" opacity=".28" /><path d="M6.500 13.500Q10 10 13.500 13.500" /><circle cx="10" cy="16" r="1.500" fill="currentColor" /></Line>
          <Line sw={1.4}><path d="M1 7.500H4L8.500 3.500V16.500L4 12.500H1ZM11.500 7Q13 10 11.500 13M14 5Q17 10 14 15M16.500 3Q21 10 16.500 17" /></Line>
          <Line sw={1.5}><path d="M8 5.500H15.500Q17.500 5.500 17.500 7.500V14Q17.500 16 15.500 16H3Q1 16 1 14V10M19 9.500V12" /><path d="M8 8H15.500V13.500H3.500V11Z" fill="currentColor" /><path d="M4.500.5 1 6H3L2 9.500 6 4.500H4Z" fill="currentColor" strokeWidth=".8" /></Line>
        </TrayIcons>
        <Clock>4:49 pm<br />27/07/2025</Clock>
      </Tray>
    </TaskbarRoot>
  );
}

export default function App() {
  return (
    <Screen>
      <Global />
      <Browser />
      <Blog />
      <FrameEdge />
      <Taskbar />
    </Screen>
  );
}
